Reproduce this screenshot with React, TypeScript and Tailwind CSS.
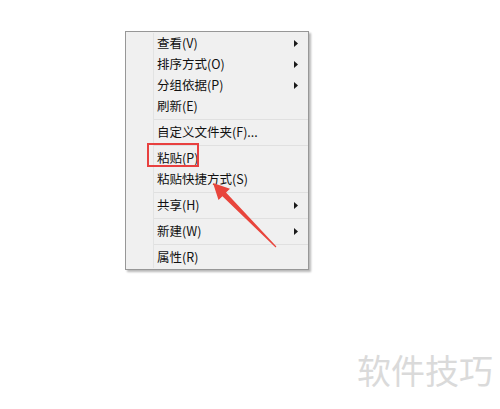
import React from "react";

type Item = { label: string; sub?: boolean } | "sep";

const items: Item[] = [
  { label: "查看(V)", sub: true },
  { label: "排序方式(O)", sub: true },
  { label: "分组依据(P)", sub: true },
  { label: "刷新(E)" },
  "sep",
  { label: "自定义文件夹(F)..." },
  "sep",
  { label: "粘贴(P)" },
  { label: "粘贴快捷方式(S)" },
  "sep",
  { label: "共享(H)", sub: true },
  "sep",
  { label: "新建(W)", sub: true },
  "sep",
  { label: "属性(R)" },
];

const SubArrow = () => (
  <svg width="4" height="7" viewBox="0 0 4 7">
    <polygon points="0,0 4,3.5 0,7" fill="#1a1a1a" />
  </svg>
);

const MenuRow = ({ label, sub }: { label: string; sub?: boolean }) => (
  <div className="flex items-center justify-between h-[21px] pl-[3px] pr-[10px]">
    <span>{label}</span>
    {sub && <SubArrow />}
  </div>
);

export default function App() {
  return (
    <div
      className="relative w-[500px] h-[409px] bg-white overflow-hidden pt-[31px] pl-[125px]"
      style={{ fontFamily: '"Noto Sans CJK SC", "Noto Sans", sans-serif' }}
    >
      {/* context menu */}
      <div className="flex w-[184px] border border-[#979797] bg-[#f0f0f0] py-[1px] text-[12.5px] text-[#111] shadow-[2px_2px_2px_rgba(0,0,0,0.28)]">
        <div className="w-[27px] shrink-0" />
        <div className="flex-1 border-l border-[#e2e3e3]">
          {items.map((it, i) =>
            it === "sep" ? (
              <div key={i} className="h-[5px] pt-[2px]">
                <div className="h-px bg-[#e0e0e0]" />
              </div>
            ) : (
              <MenuRow key={i} label={it.label} sub={it.sub} />
            )
          )}
        </div>
      </div>

      {/* annotation: red box */}
      <div className="absolute left-[147px] top-[143px] w-[52px] h-[24px] border-2 border-[#e8403f]" />

      {/* annotation: arrow */}
      <svg className="absolute left-0 top-0" width="500" height="409">
        <polygon
          points="213,183 230,188.8 226,192.6 276.4,246.6 275.6,247.4 222.4,196.2 218.5,200"
          fill="#e8453c"
        />
      </svg>

      {/* watermark */}
      <div className="absolute left-[357px] top-[353px] text-[34px] leading-none text-[#dadada]">
        软件技巧
      </div>
    </div>
  );
}
